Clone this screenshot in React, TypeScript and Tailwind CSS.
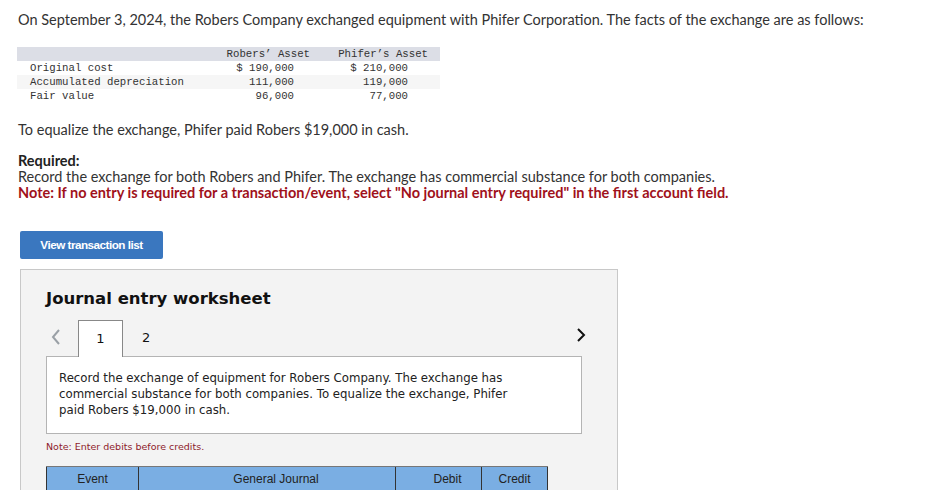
import React from "react";

const rows = [
  { label: "Original cost", r: "$ 190,000", p: "$ 210,000", shade: false },
  { label: "Accumulated depreciation", r: "111,000", p: "119,000", shade: true },
  { label: "Fair value", r: "96,000", p: "77,000", shade: false },
];

export default function App() {
  return (
    <div className="w-[934px] h-[490px] overflow-hidden bg-white text-[#333] font-['Lato',sans-serif]">
      <div className="pl-[18px] pt-[10px]">
        <p className="text-[14.5px] leading-[20px]">
          On September 3, 2024, the Robers Company exchanged equipment with Phifer Corporation. The facts of the exchange are as follows:
        </p>

        <div className="mt-[17px] w-[423px] -ml-px font-['Liberation_Mono',monospace] text-[10.7px] leading-[14px] text-[#333]">
          <div className="grid grid-cols-[203px_100px_120px] bg-[#dcdee6]">
            <div />
            <div className="text-right pr-[10px]">Robers’ Asset</div>
            <div className="text-right pr-[12px]">Phifer’s Asset</div>
          </div>
          {rows.map((row) => (
            <div
              key={row.label}
              className={`grid grid-cols-[203px_100px_120px] ${row.shade ? "bg-[#f6f6f6]" : "bg-white"}`}
            >
              <div className="pl-[13px]">{row.label}</div>
              <div className="text-right pr-[26px]">{row.r}</div>
              <div className="text-right pr-[32px]">{row.p}</div>
            </div>
          ))}
        </div>

        <p className="mt-[17px] text-[14.5px] leading-[20px]">
          To equalize the exchange, Phifer paid Robers $19,000 in cash.
        </p>

        <div className="mt-[13px] text-[14.5px] leading-[16px]">
          <p className="font-bold text-[#222]">Required:</p>
          <p>Record the exchange for both Robers and Phifer. The exchange has commercial substance for both companies.</p>
          <p className="font-bold text-[#a0111b]">
            Note: If no entry is required for a transaction/event, select "No journal entry required" in the first account field.
          </p>
        </div>
      </div>

      <div className="pl-[20px] mt-[30px]">
        <button className="w-[143px] h-[28px] rounded-[2px] bg-[#3a77bf] text-white text-[11.7px] font-bold tracking-[-0.5px] font-['Liberation_Sans',sans-serif]">
          View transaction list
        </button>

        <div className="mt-[10px] w-[598px] h-[240px] border border-[#c8c8c8] bg-[#f3f3f3] pl-[25px] pt-[18px] font-['DejaVu_Sans',sans-serif]">
          <h2 className="text-[16.5px] font-bold leading-[22px] text-[#111]">Journal entry worksheet</h2>

          <div className="mt-[10px] flex items-end h-[36px] w-[536px]">
            <svg width="12" height="18" viewBox="0 0 12 18" className="ml-[4px] mb-[10px]">
              <path d="M9 2 L3 9 L9 16" fill="none" stroke="#9aa0a6" strokeWidth="2" />
            </svg>
            <div className="ml-[16px] w-[45px] h-[37px] border border-b-0 border-[#888] bg-white flex items-center justify-center text-[13px] text-[#111] relative top-px">
              1
            </div>
            <div className="ml-[19px] h-[36px] flex items-center text-[13px] text-[#111]">2</div>
            <div className="flex-1" />
            <svg width="10" height="16" viewBox="0 0 10 16" className="mb-[13px] -mr-[4px]">
              <path d="M2 2 L8 8 L2 14" fill="none" stroke="#111" strokeWidth="2" />
            </svg>
          </div>

          <div className="w-[536px] h-[78px] border border-[#b4b4b4] bg-white pl-[12px] pt-[13px] text-[11.75px] leading-[16px] text-[#222]">
            Record the exchange of equipment for Robers Company. The exchange has
            <br />
            commercial substance for both companies. To equalize the exchange, Phifer
            <br />
            paid Robers $19,000 in cash.
          </div>

          <p className="mt-[7px] text-[9.5px] leading-[12px] text-[#8e1b2c]">Note: Enter debits before credits.</p>

          <div className="mt-[13px] w-[502px] grid grid-cols-[92px_257px_86px_67px] border-t border-[#777] bg-[#7aaee3] font-['Liberation_Sans',sans-serif] text-[12px] text-[#222] h-[24px]">
            <div className="flex items-center justify-center border-l border-[#333]">Event</div>
            <div className="flex items-center justify-center pl-[18px] border-l border-[#333]">General Journal</div>
            <div className="flex items-center justify-center pl-[18px] border-l border-[#333]">Debit</div>
            <div className="flex items-center justify-center border-l border-r border-[#333]">Credit</div>
          </div>
        </div>
      </div>
    </div>
  );
}
